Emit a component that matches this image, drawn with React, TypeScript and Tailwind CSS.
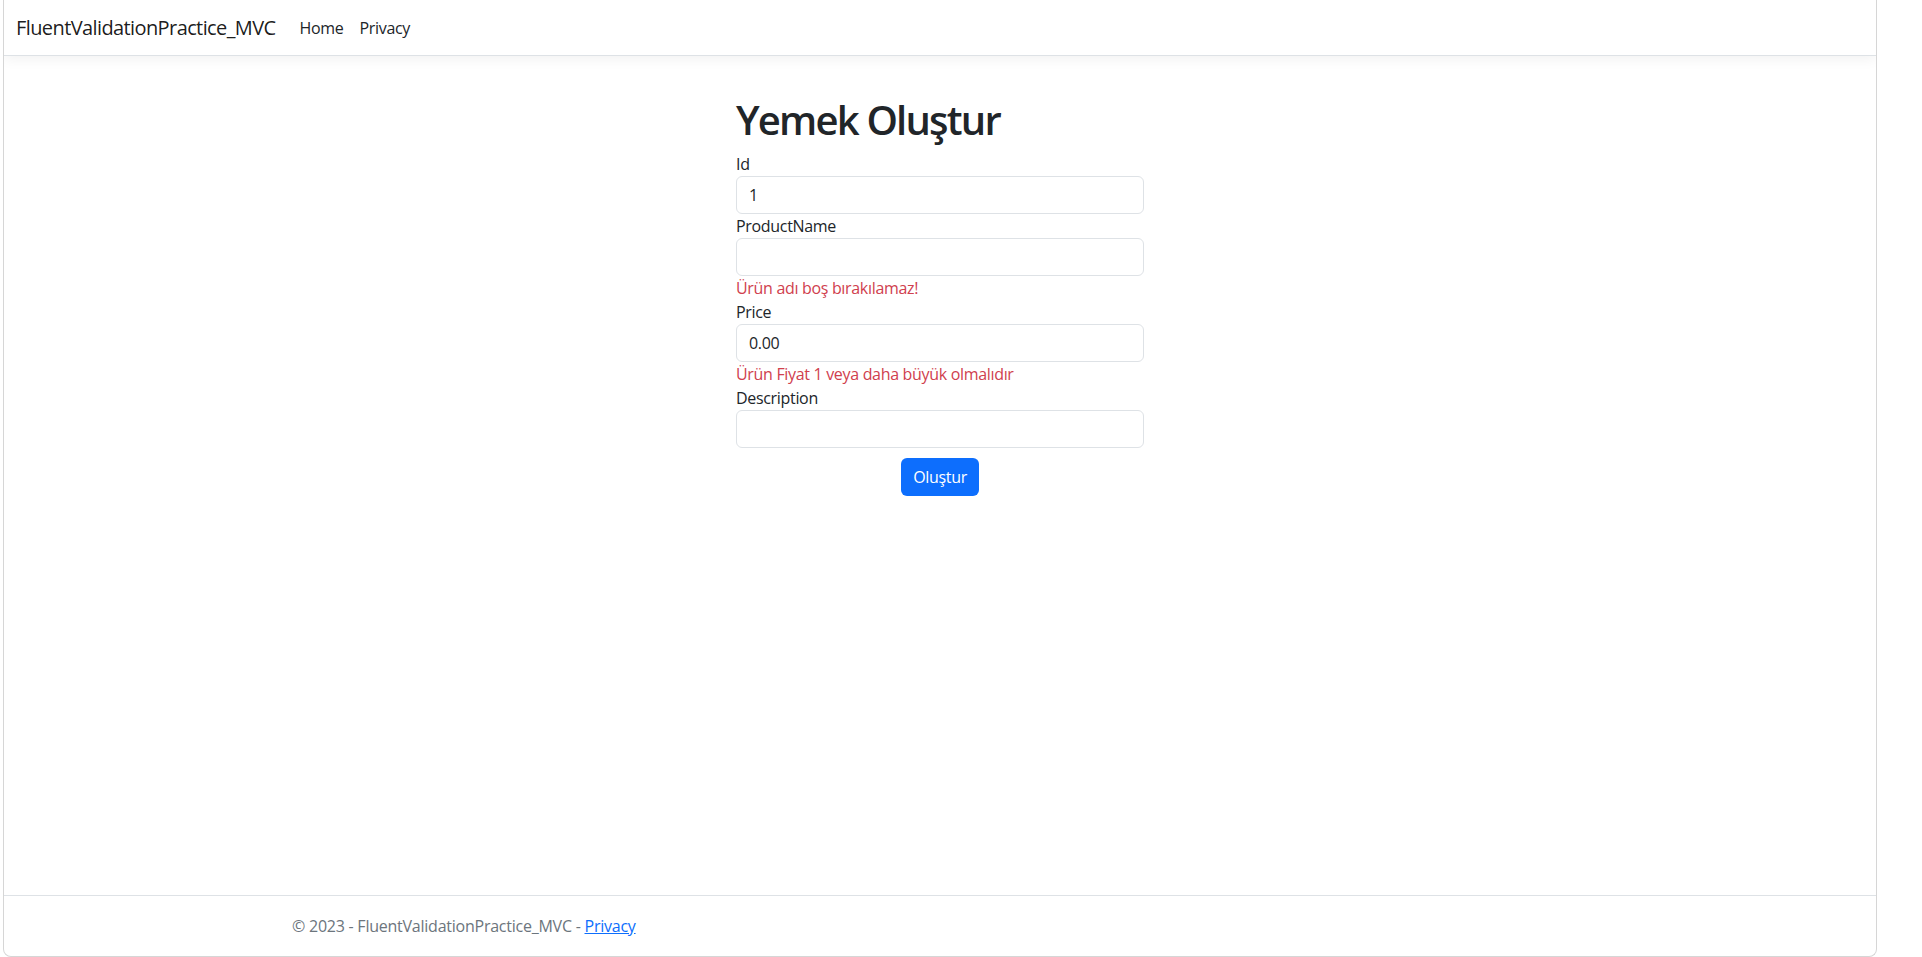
import React from "react";

const fields = [
  { label: "Id", value: "1", error: "" },
  { label: "ProductName", value: "", error: "Ürün adı boş bırakılamaz!" },
  { label: "Price", value: "0.00", error: "Ürün Fiyat 1 veya daha büyük olmalıdır" },
  { label: "Description", value: "", error: "" },
];

export default function App() {
  return (
    <div className="min-h-screen bg-white font-['Segoe_UI','Open_Sans',sans-serif] tracking-[-0.02em] text-[#212529]">
      <div className="ml-[3px] w-[1874px] h-[957px] border-x border-b border-[#d6d6d6] rounded-b-[8px] flex flex-col overflow-hidden bg-white">
        {/* Navbar */}
        <header className="h-[56px] shrink-0 flex items-center px-3 border-b border-[#dee2e6] shadow-[0_4px_12px_rgba(0,0,0,0.05)]">
          <span className="text-[20px] tracking-[-0.03em] text-[rgba(0,0,0,0.9)] mr-4 py-[5px]">FluentValidationPractice_MVC</span>
          <nav className="flex text-[16px]">
            <a className="px-2">Home</a>
            <a className="px-2">Privacy</a>
          </nav>
        </header>

        {/* Content */}
        <main className="flex-1 pt-[40px]">
          <div className="w-[408px] mx-auto flex flex-col">
            <h1 className="text-[40px] leading-[1.2] font-semibold tracking-[-0.045em] mb-2">Yemek Oluştur</h1>
            {fields.map(f => (
              <div key={f.label} className="flex flex-col">
                <label className="text-[16px] leading-6">{f.label}</label>
                <input
                  readOnly
                  value={f.value}
                  className="h-[38px] w-full px-3 text-[16px] border border-[#dee2e6] rounded-[6px] bg-white outline-none"
                />
                {f.error && <span className="text-[16px] leading-6 text-[#d0404e]">{f.error}</span>}
              </div>
            ))}
            <button className="self-center mt-[10px] h-[38px] px-3 rounded-[6px] bg-[#0d6efd] text-white text-[16px]">
              Oluştur
            </button>
          </div>
        </main>

        {/* Footer */}
        <footer className="h-[61px] shrink-0 border-t border-[#dee2e6] flex items-center">
          <div className="w-[1320px] mx-auto px-3 text-[16px] tracking-[-0.015em] text-[#6c757d]">
            © 2023 - FluentValidationPractice_MVC - <a className="text-[#0d6efd] underline">Privacy</a>
          </div>
        </footer>
      </div>
    </div>
  );
}
